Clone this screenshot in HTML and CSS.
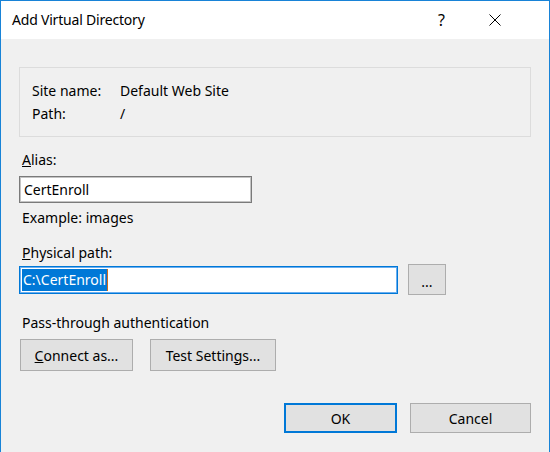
FILE: index.html
```html
<!DOCTYPE html>
<html lang="en">
<head>
    <meta charset="UTF-8">
    <title>Add Virtual Directory</title>
    <link rel="stylesheet" href="styles.css">
</head>
<body>

<div class="window">
    <div class="titlebar">
        <span class="title">Add Virtual Directory</span>
        <span class="help">?</span>
        <span class="close">
            <svg width="12" height="12" viewBox="0 0 12 12">
                <path d="M0.5 0.5 L11.5 11.5 M11.5 0.5 L0.5 11.5" stroke="#000" stroke-width="1" fill="none"/>
            </svg>
        </span>
    </div>

    <div class="content">
        <div class="group">
            <div class="info-row"><span class="info-label">Site name:</span><span>Default Web Site</span></div>
            <div class="info-row"><span class="info-label">Path:</span><span>/</span></div>
        </div>

        <div class="label alias-label"><u>A</u>lias:</div>
        <div class="textbox alias-box">CertEnroll</div>
        <div class="label example">Example: images</div>

        <div class="label path-label"><u>P</u>hysical path:</div>
        <div class="path-row">
            <div class="textbox path-box focused"><span class="selected">C:\CertEnroll</span><span class="caret"></span></div>
            <button class="btn browse">...</button>
        </div>

        <div class="label auth-label">Pass-through authentication</div>
        <div class="auth-row">
            <button class="btn connect"><u>C</u>onnect as...</button>
            <button class="btn test">Test Settin<u>g</u>s...</button>
        </div>

        <div class="footer">
            <button class="btn ok">OK</button>
            <button class="btn cancel">Cancel</button>
        </div>
    </div>
</div>

</body>
</html>
```

FILE: styles.css
```css
body {
    margin: 0;
    padding: 0;
    font-family: "Noto Sans", "Open Sans", sans-serif;
    font-size: 14px;
    color: #000;
    background: #f0f0f0;
}

.window {
    width: 550px;
    height: 452px;
    box-sizing: border-box;
    border: 1px solid #1883d7;
    border-bottom: none;
    background: #f0f0f0;
    overflow: hidden;
}

.titlebar {
    height: 38px;
    background: #fff;
    display: flex;
    align-items: center;
    padding-left: 11px;
}

.title {
    flex: 1;
    font-size: 14px;
    letter-spacing: -0.2px;
    margin-top: -1px;
}

.help {
    font-size: 16px;
    width: 12px;
    margin-right: 39px;
    margin-top: -1px;
}

.close {
    width: 12px;
    height: 12px;
    margin-right: 48px;
    display: flex;
}

.content {
    padding: 0 18px;
}

.group {
    margin-top: 28px;
    height: 70px;
    box-sizing: border-box;
    border: 1px solid #dcdcdc;
    padding: 11px 0 0 12px;
}

.info-row {
    display: flex;
    line-height: 23px;
}

.info-label {
    width: 88px;
}

.label {
    line-height: 20px;
    padding-left: 3px;
}

.alias-label {
    margin-top: 13px;
}

.textbox {
    box-sizing: border-box;
    background: #fff;
    border: 1px solid #7a7a7a;
    box-shadow: inset 0 0 0 1px #c4c4c4;
    padding: 0 4px;
    display: flex;
    align-items: center;
}

.alias-box {
    margin-top: 6px;
    width: 233px;
    height: 27px;
}

.example {
    margin-top: 5px;
}

.path-label {
    margin-top: 15px;
}

.path-row {
    margin-top: 1px;
    display: flex;
    align-items: center;
    gap: 10px;
}

.path-box {
    width: 379px;
    height: 28px;
    padding: 0 2px;
}

.focused {
    border: 1px solid #0078d7;
    box-shadow: inset 0 0 0 1px #6aaef0;
}

.selected {
    background: #0078d7;
    color: #fff;
    line-height: 22px;
    padding: 0 1px;
}

.caret {
    width: 1px;
    height: 22px;
    background: #d06a1a;
}

.btn {
    font-family: inherit;
    font-size: 14px;
    color: #000;
    background: #e1e1e1;
    border: 1px solid #adadad;
    padding: 0;
    box-sizing: border-box;
}

.browse {
    width: 38px;
    height: 31px;
    padding-top: 3px;
}

.auth-label {
    margin-top: 18px;
}

.auth-row {
    margin-top: 6px;
    display: flex;
    gap: 17px;
    padding-left: 1px;
}

.connect {
    width: 113px;
    height: 32px;
}

.test {
    width: 126px;
    height: 32px;
}

.footer {
    margin-top: 32px;
    display: flex;
    justify-content: flex-end;
    gap: 13px;
}

.ok {
    width: 113px;
    height: 30px;
    border: 2px solid #0078d7;
}

.cancel {
    width: 121px;
    height: 30px;
}
```
